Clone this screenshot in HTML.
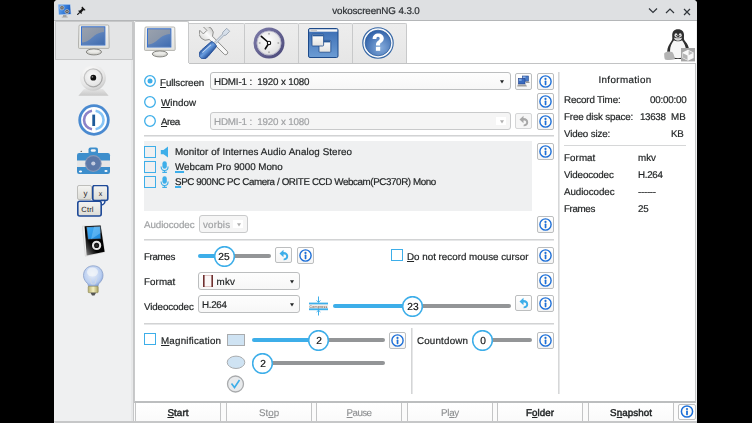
<!DOCTYPE html><html><head><meta charset="utf-8"><style>
html,body{margin:0;padding:0}
body{width:752px;height:423px;background:#000;position:relative;overflow:hidden;font-family:"Liberation Sans",sans-serif;font-size:9.8px;letter-spacing:0.2px;color:#232627;text-rendering:geometricPrecision}
div{position:absolute}
.t{white-space:nowrap;line-height:12px;will-change:transform;-webkit-text-stroke:0.2px currentColor}
.u{text-decoration:underline;text-decoration-thickness:1px;text-underline-offset:0.8px}
.ub{text-decoration:underline;text-decoration-color:#3daee9;text-decoration-thickness:2px;text-underline-offset:0.6px}
.h{width:21px;height:21px;box-sizing:border-box;border:1.6px solid #3daee9;border-radius:50%;background:#ffffff;text-align:center;line-height:18.5px;font-size:10.2px;letter-spacing:0;color:#141617;will-change:transform;-webkit-text-stroke:0.2px currentColor}
.bt{box-sizing:border-box;border-left:1px solid #c4c5c6;border-right:1px solid #c4c5c6;background:linear-gradient(#ffffff,#fafafa);text-align:center;line-height:22px;font-size:9.8px;will-change:transform;-webkit-text-stroke:0.12px currentColor}
.bt b{font-weight:normal;-webkit-text-stroke:0.45px currentColor}
</style></head><body>
<div style="left:54px;top:0px;width:643px;height:423px;background:#eff0f1;border-radius:4px 4px 0 0;"></div>
<div style="left:54px;top:0px;width:643px;height:21px;background:#dee0e2;border-radius:4px 4px 0 0;border-bottom:1px solid #b4b6b8;box-sizing:border-box;"></div>
<div class="t" style="left:275.5px;width:200px;text-align:center;top:5.9px;letter-spacing:-0.106px;color:#2a2e32">vokoscreenNG 4.3.0</div>
<svg style="position:absolute;left:648px;top:7px" width="10" height="8" viewBox="0 0 10 8"><path d="M1 1.5 L5 5.5 L9 1.5" fill="none" stroke="#31363b" stroke-width="1.2"/></svg>
<svg style="position:absolute;left:665px;top:7px" width="10" height="8" viewBox="0 0 10 8"><path d="M1 6 L5 2 L9 6" fill="none" stroke="#31363b" stroke-width="1.2"/></svg>
<svg style="position:absolute;left:683px;top:8px" width="8" height="8" viewBox="0 0 8 8"><path d="M1 1 L7 7 M7 1 L1 7" fill="none" stroke="#31363b" stroke-width="1.2"/></svg>
<svg style="position:absolute;left:57px;top:3px" width="15" height="15" viewBox="0 0 15 15"><defs><linearGradient id="apg" x1="0" y1="0" x2="1" y2="0.3"><stop offset="0" stop-color="#7ab0f0"/><stop offset="0.5" stop-color="#3f86e0"/><stop offset="1" stop-color="#1a5cc0"/></linearGradient></defs><path d="M0.8 1 L13.6 1.2 L14.2 11.6 L1.4 12 Z" fill="url(#apg)" stroke="#dfe6ee" stroke-width="0.8"/><circle cx="5" cy="4.8" r="2.1" fill="#5c5c5c" stroke="#e8e8e8" stroke-width="0.5"/><circle cx="10" cy="8.6" r="2.1" fill="#5c5c5c" stroke="#e8e8e8" stroke-width="0.5"/><circle cx="5" cy="4.8" r="0.6" fill="#ddd"/><circle cx="10" cy="8.6" r="0.6" fill="#ddd"/><rect x="6" y="12.3" width="3.5" height="1.5" fill="#8c8c8c"/><rect x="4.8" y="13.6" width="6" height="1" fill="#b0b0b0"/></svg>
<svg style="position:absolute;left:77px;top:5px" width="10" height="10" viewBox="0 0 10 10"><path d="M5.2 1.6 L8.6 5 L7.6 5.6 L6.4 5.3 L4.6 7.2 L4.8 8.6 L4.2 9 L1.2 6 L1.6 5.4 L3 5.6 L4.8 3.8 L4.5 2.6 Z" fill="#151515"/><path d="M2.8 7.4 L0.3 9.8" stroke="#151515" stroke-width="1.1"/></svg>
<div style="left:54px;top:21px;width:79px;height:402px;background:#eff0f1;"></div>
<div style="left:131px;top:21px;width:2px;height:402px;background:#e7e8e9;"></div>
<div style="left:133px;top:21px;width:1px;height:402px;background:#c6c7c8;"></div>
<div style="left:55px;top:21px;width:78px;height:39px;background:#e4e5e6;border:1px solid #c6c7c8;box-sizing:border-box;"></div>
<div style="left:134px;top:21px;width:562px;height:42px;background:#ffffff;"></div>
<div style="left:134px;top:63px;width:562px;height:340px;background:#ffffff;border-right:1px solid #c4c6c7;border-bottom:2px solid #bcbebf;border-left:1px solid #c8c9ca;box-sizing:border-box;"></div>
<div style="left:189px;top:63px;width:507px;height:1px;background:#c2c3c4;"></div>
<div style="left:134px;top:21px;width:55px;height:42px;background:#ffffff;border-left:1px solid #c8c9ca;border-top:1px solid #c8c9ca;border-right:1px solid #c8c9ca;border-radius:2px 2px 0 0;box-sizing:border-box;"></div>
<div style="left:189px;top:23px;width:56px;height:40px;background:linear-gradient(#ededed,#e6e6e6);border:1px solid #c8c9ca;border-bottom:none;border-left:none;border-radius:0 2px 0 0;box-sizing:border-box;"></div>
<div style="left:245px;top:23px;width:54px;height:40px;background:linear-gradient(#ededed,#e6e6e6);border:1px solid #c8c9ca;border-bottom:none;border-left:none;border-radius:0 2px 0 0;box-sizing:border-box;"></div>
<div style="left:299px;top:23px;width:54px;height:40px;background:linear-gradient(#ededed,#e6e6e6);border:1px solid #c8c9ca;border-bottom:none;border-left:none;border-radius:0 2px 0 0;box-sizing:border-box;"></div>
<div style="left:353px;top:23px;width:54px;height:40px;background:linear-gradient(#ededed,#e6e6e6);border:1px solid #c8c9ca;border-bottom:none;border-left:none;border-radius:0 2px 0 0;box-sizing:border-box;"></div>
<svg style="position:absolute;left:144px;top:75px" width="12" height="12" viewBox="0 0 12 12"><circle cx="6" cy="6" r="5.3" fill="#ffffff" stroke="#3daee9" stroke-width="1.3"/><circle cx="6" cy="6" r="2.5" fill="#3daee9"/></svg>
<div class="t" style="left:160.3px;top:77.5px;letter-spacing:-0.111px;"><span class="u">F</span>ullscreen</div>
<div style="left:210px;top:72px;width:301px;height:18px;border:1px solid #bcbebf;border-radius:3px;background:linear-gradient(#fdfdfd,#f7f7f7);box-sizing:border-box;"></div>
<div class="t" style="left:214px;top:77.2px;letter-spacing:-0.15px;color:#232627">HDMI-1 :&nbsp; 1920 x 1080</div>
<svg style="position:absolute;left:499.5px;top:79.5px" width="4" height="4" viewBox="0 0 4 4"><path d="M0 0.2 L4 0.2 L2 3.6 Z" fill="#232627"/></svg>
<div style="left:515px;top:73px;width:17px;height:17px;border:1px solid #bcbebf;border-radius:2px;background:linear-gradient(#ffffff,#f4f4f4);box-sizing:border-box;"></div>
<div style="left:537px;top:73px;width:17px;height:17px;border:1px solid #bcbebf;border-radius:2px;background:linear-gradient(#ffffff,#f4f4f4);box-sizing:border-box;"></div>
<svg style="position:absolute;left:539px;top:74.5px" width="13" height="13" viewBox="0 0 13 13"><circle cx="6.5" cy="6.5" r="5.6" fill="#fffdf8" stroke="#1d6fd8" stroke-width="1.4"/><circle cx="6.5" cy="3.9" r="1.1" fill="#1d6fd8"/><rect x="5.7" y="5.6" width="1.7" height="4.6" rx="0.6" fill="#1d6fd8"/></svg>
<svg style="position:absolute;left:144px;top:96px" width="12" height="12" viewBox="0 0 12 12"><circle cx="6" cy="6" r="5.3" fill="#ffffff" stroke="#3daee9" stroke-width="1.3"/></svg>
<div class="t" style="left:160.5px;top:97.5px;letter-spacing:0.06px;"><span class="u">W</span>indow</div>
<div style="left:537px;top:93px;width:17px;height:17px;border:1px solid #bcbebf;border-radius:2px;background:linear-gradient(#ffffff,#f4f4f4);box-sizing:border-box;"></div>
<svg style="position:absolute;left:539px;top:94.5px" width="13" height="13" viewBox="0 0 13 13"><circle cx="6.5" cy="6.5" r="5.6" fill="#fffdf8" stroke="#1d6fd8" stroke-width="1.4"/><circle cx="6.5" cy="3.9" r="1.1" fill="#1d6fd8"/><rect x="5.7" y="5.6" width="1.7" height="4.6" rx="0.6" fill="#1d6fd8"/></svg>
<svg style="position:absolute;left:144px;top:115px" width="12" height="12" viewBox="0 0 12 12"><circle cx="6" cy="6" r="5.3" fill="#ffffff" stroke="#3daee9" stroke-width="1.3"/></svg>
<div class="t" style="left:160.5px;top:116.5px;letter-spacing:-0.467px;"><span class="u">A</span>rea</div>
<div style="left:210px;top:112px;width:301px;height:18px;border:1px solid #c9cacb;border-radius:3px;background:#f5f5f5;box-sizing:border-box;"></div>
<div class="t" style="left:214px;top:117.2px;letter-spacing:-0.15px;color:#a0a2a4">HDMI-1 :&nbsp; 1920 x 1080</div>
<div style="left:496px;top:117px;width:10px;height:8px;background:#fff"></div>
<svg style="position:absolute;left:499.5px;top:119.5px" width="4" height="4" viewBox="0 0 4 4"><path d="M0 0.2 L4 0.2 L2 3.6 Z" fill="#b0b0b0"/></svg>
<div style="left:515px;top:113px;width:17px;height:16px;border:1px solid #d5d6d7;border-radius:2px;background:#f6f6f6;box-sizing:border-box;"></div>
<svg style="position:absolute;left:517px;top:114px" width="13" height="14" viewBox="0 0 13 14"><path d="M2.5 5.5 L6.5 1.8 L6.5 4 C9.5 4 11.2 5.8 11.2 8.2 C11.2 10.6 9.3 12.4 6.5 12.3 L6.8 10.6 C8.2 10.5 9.2 9.6 9.2 8.3 C9.2 7 8.3 6.5 6.5 6.6 L6.5 9.2 Z" fill="#a8a8a8"/></svg>
<div style="left:537px;top:113px;width:17px;height:17px;border:1px solid #bcbebf;border-radius:2px;background:linear-gradient(#ffffff,#f4f4f4);box-sizing:border-box;"></div>
<svg style="position:absolute;left:539px;top:114.5px" width="13" height="13" viewBox="0 0 13 13"><circle cx="6.5" cy="6.5" r="5.6" fill="#fffdf8" stroke="#1d6fd8" stroke-width="1.4"/><circle cx="6.5" cy="3.9" r="1.1" fill="#1d6fd8"/><rect x="5.7" y="5.6" width="1.7" height="4.6" rx="0.6" fill="#1d6fd8"/></svg>
<div style="left:144px;top:135px;width:410px;height:2px;background:linear-gradient(#d2d3d4 50%,#e6e7e8 50%);"></div>
<div style="left:144px;top:141px;width:388px;height:70px;background:#eff0f1;"></div>
<div style="left:144px;top:146px;width:12px;height:12px;border:1.8px solid #3daee9;box-sizing:border-box;"></div>
<svg style="position:absolute;left:160px;top:146px" width="9" height="12" viewBox="0 0 9 12"><path d="M0.8 4 L3.5 4 L8 0.6 L8 11.6 L3.5 8.3 L0.8 8.3 Z" fill="#3daee9"/></svg>
<div class="t" style="left:175px;top:146.5px;letter-spacing:0.1px;">Monitor of Internes Audio Analog Stereo</div>
<div style="left:144px;top:161px;width:12px;height:12px;border:1.8px solid #3daee9;box-sizing:border-box;"></div>
<svg style="position:absolute;left:160px;top:161px" width="9" height="12" viewBox="0 0 9 12"><rect x="2.4" y="0.2" width="4.4" height="7.6" rx="2.2" fill="#3daee9"/><path d="M1.1 5.4 C1.1 8.2 2.7 9.5 4.6 9.5 C6.5 9.5 8.1 8.2 8.1 5.4" fill="none" stroke="#3daee9" stroke-width="1.1"/><path d="M4.6 9.5 L4.6 11 M2.3 11.4 L6.9 11.4" stroke="#3daee9" stroke-width="1.1"/></svg>
<div class="t" style="left:175px;top:161.5px;letter-spacing:-0.026px;"><span class="ub">W</span>ebcam Pro 9000 Mono</div>
<div style="left:144px;top:176px;width:12px;height:12px;border:1.8px solid #3daee9;box-sizing:border-box;"></div>
<svg style="position:absolute;left:160px;top:176px" width="9" height="12" viewBox="0 0 9 12"><rect x="2.4" y="0.2" width="4.4" height="7.6" rx="2.2" fill="#3daee9"/><path d="M1.1 5.4 C1.1 8.2 2.7 9.5 4.6 9.5 C6.5 9.5 8.1 8.2 8.1 5.4" fill="none" stroke="#3daee9" stroke-width="1.1"/><path d="M4.6 9.5 L4.6 11 M2.3 11.4 L6.9 11.4" stroke="#3daee9" stroke-width="1.1"/></svg>
<div class="t" style="left:175px;top:176.5px;letter-spacing:-0.4px;"><span class="ub">S</span>PC 900NC PC Camera / ORITE CCD Webcam(PC370R) Mono</div>
<div style="left:537px;top:143px;width:17px;height:17px;border:1px solid #bcbebf;border-radius:2px;background:linear-gradient(#ffffff,#f4f4f4);box-sizing:border-box;"></div>
<svg style="position:absolute;left:539px;top:144.5px" width="13" height="13" viewBox="0 0 13 13"><circle cx="6.5" cy="6.5" r="5.6" fill="#fffdf8" stroke="#1d6fd8" stroke-width="1.4"/><circle cx="6.5" cy="3.9" r="1.1" fill="#1d6fd8"/><rect x="5.7" y="5.6" width="1.7" height="4.6" rx="0.6" fill="#1d6fd8"/></svg>
<div class="t" style="left:144px;top:219.5px;letter-spacing:-0.067px;color:#a0a2a4">Audiocodec</div>
<div style="left:199px;top:215px;width:49px;height:18px;border:1px solid #c9cacb;border-radius:3px;background:#f5f5f5;box-sizing:border-box;"></div>
<div class="t" style="left:203px;top:220.2px;color:#a0a2a4">vorbis</div>
<div style="left:233px;top:220px;width:10px;height:8px;background:#fff"></div>
<svg style="position:absolute;left:236.5px;top:222.5px" width="4" height="4" viewBox="0 0 4 4"><path d="M0 0.2 L4 0.2 L2 3.6 Z" fill="#b0b0b0"/></svg>
<div style="left:537px;top:216px;width:17px;height:17px;border:1px solid #bcbebf;border-radius:2px;background:linear-gradient(#ffffff,#f4f4f4);box-sizing:border-box;"></div>
<svg style="position:absolute;left:539px;top:217.5px" width="13" height="13" viewBox="0 0 13 13"><circle cx="6.5" cy="6.5" r="5.6" fill="#fffdf8" stroke="#1d6fd8" stroke-width="1.4"/><circle cx="6.5" cy="3.9" r="1.1" fill="#1d6fd8"/><rect x="5.7" y="5.6" width="1.7" height="4.6" rx="0.6" fill="#1d6fd8"/></svg>
<div style="left:144px;top:239px;width:410px;height:2px;background:linear-gradient(#d2d3d4 50%,#e6e7e8 50%);"></div>
<div class="t" style="left:144px;top:251.5px;letter-spacing:-0.38px;">Frames</div>
<div style="left:198px;top:254px;width:26px;height:4px;background:#3daee9;border-radius:2px;"></div>
<div style="left:224px;top:254px;width:47px;height:4px;background:#939597;border-radius:2px;"></div>
<svg style="position:absolute;left:213.5px;top:245.5px" width="21" height="21" viewBox="0 0 21 21"><circle cx="10.5" cy="10.5" r="9.85" fill="#ffffff" stroke="#3daee9" stroke-width="1.6"/></svg>
<div class="t" style="left:209px;width:30px;text-align:center;top:251.5px;font-size:10.2px;letter-spacing:0;color:#141617;-webkit-text-stroke:0.2px currentColor">25</div>
<div style="left:275px;top:247px;width:17px;height:16px;border:1px solid #bcbebf;border-radius:2px;background:linear-gradient(#ffffff,#f4f4f4);box-sizing:border-box;"></div>
<svg style="position:absolute;left:277px;top:248px" width="13" height="14" viewBox="0 0 13 14"><path d="M2.5 5.5 L6.5 1.8 L6.5 4 C9.5 4 11.2 5.8 11.2 8.2 C11.2 10.6 9.3 12.4 6.5 12.3 L6.8 10.6 C8.2 10.5 9.2 9.6 9.2 8.3 C9.2 7 8.3 6.5 6.5 6.6 L6.5 9.2 Z" fill="#3daee9"/></svg>
<div style="left:297px;top:247px;width:17px;height:17px;border:1px solid #bcbebf;border-radius:2px;background:linear-gradient(#ffffff,#f4f4f4);box-sizing:border-box;"></div>
<svg style="position:absolute;left:299px;top:248.5px" width="13" height="13" viewBox="0 0 13 13"><circle cx="6.5" cy="6.5" r="5.6" fill="#fffdf8" stroke="#1d6fd8" stroke-width="1.4"/><circle cx="6.5" cy="3.9" r="1.1" fill="#1d6fd8"/><rect x="5.7" y="5.6" width="1.7" height="4.6" rx="0.6" fill="#1d6fd8"/></svg>
<div style="left:391px;top:249px;width:12px;height:12px;border:1.8px solid #3daee9;box-sizing:border-box;"></div>
<div class="t" style="left:407px;top:251.5px;letter-spacing:0.0px;"><span class="u">D</span>o not record mouse cursor</div>
<div style="left:537px;top:247px;width:17px;height:17px;border:1px solid #bcbebf;border-radius:2px;background:linear-gradient(#ffffff,#f4f4f4);box-sizing:border-box;"></div>
<svg style="position:absolute;left:539px;top:248.5px" width="13" height="13" viewBox="0 0 13 13"><circle cx="6.5" cy="6.5" r="5.6" fill="#fffdf8" stroke="#1d6fd8" stroke-width="1.4"/><circle cx="6.5" cy="3.9" r="1.1" fill="#1d6fd8"/><rect x="5.7" y="5.6" width="1.7" height="4.6" rx="0.6" fill="#1d6fd8"/></svg>
<div class="t" style="left:144px;top:276.5px;letter-spacing:0.06px;">Format</div>
<div style="left:198px;top:272px;width:102px;height:18px;border:1px solid #bcbebf;border-radius:3px;background:linear-gradient(#fdfdfd,#f7f7f7);box-sizing:border-box;"></div>
<div class="t" style="left:202px;top:277.2px;color:#232627">&nbsp;&nbsp;&nbsp;&nbsp;&nbsp;mkv</div>
<svg style="position:absolute;left:289.5px;top:279.5px" width="4" height="4" viewBox="0 0 4 4"><path d="M0 0.2 L4 0.2 L2 3.6 Z" fill="#232627"/></svg>
<svg style="position:absolute;left:203px;top:275px" width="10" height="12" viewBox="0 0 10 12"><rect x="0.5" y="0.5" width="9" height="11" fill="#fbf6f6" stroke="#d9b8b8" stroke-width="0.8"/><rect x="0" y="0" width="1.6" height="12" fill="#6f2f2f"/><rect x="8.4" y="0" width="1.6" height="12" fill="#6f2f2f"/></svg>
<div style="left:537px;top:272px;width:17px;height:17px;border:1px solid #bcbebf;border-radius:2px;background:linear-gradient(#ffffff,#f4f4f4);box-sizing:border-box;"></div>
<svg style="position:absolute;left:539px;top:273.5px" width="13" height="13" viewBox="0 0 13 13"><circle cx="6.5" cy="6.5" r="5.6" fill="#fffdf8" stroke="#1d6fd8" stroke-width="1.4"/><circle cx="6.5" cy="3.9" r="1.1" fill="#1d6fd8"/><rect x="5.7" y="5.6" width="1.7" height="4.6" rx="0.6" fill="#1d6fd8"/></svg>
<div class="t" style="left:144px;top:301.5px;letter-spacing:-0.133px;">Videocodec</div>
<div style="left:198px;top:295px;width:102px;height:18px;border:1px solid #bcbebf;border-radius:3px;background:linear-gradient(#fdfdfd,#f7f7f7);box-sizing:border-box;"></div>
<div class="t" style="left:202px;top:300.2px;letter-spacing:-0.325px;color:#232627">H.264</div>
<svg style="position:absolute;left:289.5px;top:302.5px" width="4" height="4" viewBox="0 0 4 4"><path d="M0 0.2 L4 0.2 L2 3.6 Z" fill="#232627"/></svg>
<svg style="position:absolute;left:309px;top:296px" width="19" height="20" viewBox="0 0 19 20"><rect x="0" y="6.6" width="19" height="2" fill="#3daee9"/><rect x="0" y="12.2" width="19" height="2" fill="#3daee9"/><rect x="0" y="8.6" width="19" height="3.6" fill="#f2ece8"/><path d="M9.5 0.5 L9.5 6.5 M7.6 4.4 L9.5 6.4 L11.4 4.4 M9.5 14 L9.5 19.5 M7.6 16 L9.5 14.2 L11.4 16" fill="none" stroke="#3daee9" stroke-width="1"/><text x="9.5" y="11.6" font-family="Liberation Sans" font-size="3.6" fill="#5a4a40" text-anchor="middle">Compress</text></svg>
<div style="left:333px;top:304px;width:79.5px;height:4px;background:#3daee9;border-radius:2px;"></div>
<div style="left:412.5px;top:304px;width:98.5px;height:4px;background:#939597;border-radius:2px;"></div>
<svg style="position:absolute;left:402.0px;top:295.5px" width="21" height="21" viewBox="0 0 21 21"><circle cx="10.5" cy="10.5" r="9.85" fill="#ffffff" stroke="#3daee9" stroke-width="1.6"/></svg>
<div class="t" style="left:397.5px;width:30px;text-align:center;top:301.5px;font-size:10.2px;letter-spacing:0;color:#141617;-webkit-text-stroke:0.2px currentColor">23</div>
<div style="left:515px;top:295px;width:17px;height:16px;border:1px solid #bcbebf;border-radius:2px;background:linear-gradient(#ffffff,#f4f4f4);box-sizing:border-box;"></div>
<svg style="position:absolute;left:517px;top:296px" width="13" height="14" viewBox="0 0 13 14"><path d="M2.5 5.5 L6.5 1.8 L6.5 4 C9.5 4 11.2 5.8 11.2 8.2 C11.2 10.6 9.3 12.4 6.5 12.3 L6.8 10.6 C8.2 10.5 9.2 9.6 9.2 8.3 C9.2 7 8.3 6.5 6.5 6.6 L6.5 9.2 Z" fill="#3daee9"/></svg>
<div style="left:537px;top:295px;width:17px;height:17px;border:1px solid #bcbebf;border-radius:2px;background:linear-gradient(#ffffff,#f4f4f4);box-sizing:border-box;"></div>
<svg style="position:absolute;left:539px;top:296.5px" width="13" height="13" viewBox="0 0 13 13"><circle cx="6.5" cy="6.5" r="5.6" fill="#fffdf8" stroke="#1d6fd8" stroke-width="1.4"/><circle cx="6.5" cy="3.9" r="1.1" fill="#1d6fd8"/><rect x="5.7" y="5.6" width="1.7" height="4.6" rx="0.6" fill="#1d6fd8"/></svg>
<div style="left:144px;top:323px;width:410px;height:2px;background:linear-gradient(#d2d3d4 50%,#e6e7e8 50%);"></div>
<div style="left:144px;top:333px;width:12px;height:12px;border:1.8px solid #3daee9;box-sizing:border-box;"></div>
<div class="t" style="left:161px;top:335.5px;letter-spacing:0.192px;"><span class="u">M</span>agnification</div>
<div style="left:227px;top:334px;width:18px;height:12px;background:#cfe3f3;border:1px solid #a9abad;box-sizing:border-box;"></div>
<div style="left:252px;top:338px;width:66.5px;height:4px;background:#3daee9;border-radius:2px;"></div>
<div style="left:318.5px;top:338px;width:66.5px;height:4px;background:#939597;border-radius:2px;"></div>
<svg style="position:absolute;left:308.0px;top:329.5px" width="21" height="21" viewBox="0 0 21 21"><circle cx="10.5" cy="10.5" r="9.85" fill="#ffffff" stroke="#3daee9" stroke-width="1.6"/></svg>
<div class="t" style="left:303.5px;width:30px;text-align:center;top:335.5px;font-size:10.2px;letter-spacing:0;color:#141617;-webkit-text-stroke:0.2px currentColor">2</div>
<div style="left:389px;top:332px;width:17px;height:17px;border:1px solid #bcbebf;border-radius:2px;background:linear-gradient(#ffffff,#f4f4f4);box-sizing:border-box;"></div>
<svg style="position:absolute;left:391px;top:333.5px" width="13" height="13" viewBox="0 0 13 13"><circle cx="6.5" cy="6.5" r="5.6" fill="#fffdf8" stroke="#1d6fd8" stroke-width="1.4"/><circle cx="6.5" cy="3.9" r="1.1" fill="#1d6fd8"/><rect x="5.7" y="5.6" width="1.7" height="4.6" rx="0.6" fill="#1d6fd8"/></svg>
<div style="left:411px;top:328px;width:2px;height:66px;background:linear-gradient(90deg,#d4d5d6 50%,#e6e7e8 50%);"></div>
<svg style="position:absolute;left:226px;top:355px" width="20" height="15" viewBox="0 0 20 15"><ellipse cx="10" cy="7.3" rx="8.8" ry="6.2" fill="#cfe3f3" stroke="#a9abad" stroke-width="1"/></svg>
<div style="left:252px;top:361px;width:10.5px;height:4px;background:#3daee9;border-radius:2px;"></div>
<div style="left:262.5px;top:361px;width:122.5px;height:4px;background:#939597;border-radius:2px;"></div>
<svg style="position:absolute;left:252.0px;top:352.5px" width="21" height="21" viewBox="0 0 21 21"><circle cx="10.5" cy="10.5" r="9.85" fill="#ffffff" stroke="#3daee9" stroke-width="1.6"/></svg>
<div class="t" style="left:247.5px;width:30px;text-align:center;top:358.5px;font-size:10.2px;letter-spacing:0;color:#141617;-webkit-text-stroke:0.2px currentColor">2</div>
<svg style="position:absolute;left:226px;top:375px" width="19" height="18" viewBox="0 0 19 18"><circle cx="9.5" cy="9" r="8" fill="#e8eaec" stroke="#a9abad" stroke-width="1.3"/><path d="M5.5 8.5 L8.5 12.5 L13.5 5" fill="none" stroke="#3daee9" stroke-width="1.6"/></svg>
<div class="t" style="left:417px;top:335.5px;letter-spacing:0.175px;">Countdown</div>
<div style="left:472px;top:338px;width:10.5px;height:4px;background:#3daee9;border-radius:2px;"></div>
<div style="left:482.5px;top:338px;width:49.5px;height:4px;background:#939597;border-radius:2px;"></div>
<svg style="position:absolute;left:472.0px;top:329.5px" width="21" height="21" viewBox="0 0 21 21"><circle cx="10.5" cy="10.5" r="9.85" fill="#ffffff" stroke="#3daee9" stroke-width="1.6"/></svg>
<div class="t" style="left:467.5px;width:30px;text-align:center;top:335.5px;font-size:10.2px;letter-spacing:0;color:#141617;-webkit-text-stroke:0.2px currentColor">0</div>
<div style="left:537px;top:332px;width:17px;height:17px;border:1px solid #bcbebf;border-radius:2px;background:linear-gradient(#ffffff,#f4f4f4);box-sizing:border-box;"></div>
<svg style="position:absolute;left:539px;top:333.5px" width="13" height="13" viewBox="0 0 13 13"><circle cx="6.5" cy="6.5" r="5.6" fill="#fffdf8" stroke="#1d6fd8" stroke-width="1.4"/><circle cx="6.5" cy="3.9" r="1.1" fill="#1d6fd8"/><rect x="5.7" y="5.6" width="1.7" height="4.6" rx="0.6" fill="#1d6fd8"/></svg>
<div style="left:558px;top:72px;width:2px;height:322px;background:linear-gradient(90deg,#d6d7d8 50%,#e6e7e8 50%);"></div>
<div class="t" style="left:525.0px;width:200px;text-align:center;top:74.5px;letter-spacing:0.38px;">Information</div>
<div class="t" style="left:563.8px;top:94.5px;letter-spacing:-0.145px;">Record Time:</div>
<div class="t" style="right:65.20000000000005px;top:94.5px;letter-spacing:-0.2px;">00:00:00</div>
<div class="t" style="left:563.8px;top:111.5px;letter-spacing:-0.173px;">Free disk space:</div>
<div class="t" style="left:640px;top:111.5px;letter-spacing:-0.325px;">13638</div>
<div class="t" style="left:671px;top:111.5px;letter-spacing:0.2px;">MB</div>
<div class="t" style="left:563.8px;top:128.5px;letter-spacing:-0.14px;">Video size:</div>
<div class="t" style="left:671px;top:128.5px;letter-spacing:-0.3px;">KB</div>
<div style="left:564px;top:145px;width:122px;height:1px;background:#d6d7d8;"></div>
<div class="t" style="left:563.8px;top:152.5px;letter-spacing:0.06px;">Format</div>
<div class="t" style="left:638px;top:152.5px;letter-spacing:0.0px;">mkv</div>
<div class="t" style="left:563.8px;top:169.5px;letter-spacing:-0.133px;">Videocodec</div>
<div class="t" style="left:638px;top:169.5px;letter-spacing:-0.325px;">H.264</div>
<div class="t" style="left:563.8px;top:186.5px;letter-spacing:-0.067px;">Audiocodec</div>
<div class="t" style="left:638px;top:186.5px;letter-spacing:-0.3px;">------</div>
<div class="t" style="left:563.8px;top:203.5px;letter-spacing:-0.38px;">Frames</div>
<div class="t" style="left:638px;top:203.5px;letter-spacing:-0.3px;">25</div>
<svg style="position:absolute;left:144px;top:26px" width="32" height="32" viewBox="0 0 32 32"><defs><linearGradient id="mbz" x1="0" y1="0" x2="0" y2="1"><stop offset="0" stop-color="#f4f4f2"/><stop offset="1" stop-color="#e2e2de"/></linearGradient>
<linearGradient id="msc" x1="0" y1="0" x2="1" y2="1"><stop offset="0" stop-color="#9aa2ae"/><stop offset="1" stop-color="#7d8ca4"/></linearGradient>
<linearGradient id="msb" x1="0" y1="0" x2="1" y2="1"><stop offset="0" stop-color="#7494c4"/><stop offset="1" stop-color="#3f6cb0"/></linearGradient></defs>
<path d="M2 1 L29.8 1 Q30.8 1 30.8 2 L31.2 23.4 Q31.2 24.4 30.2 24.4 L1.4 24.4 Q0.4 24.4 0.4 23.4 L1 2 Q1 1 2 1 Z" fill="url(#mbz)" stroke="#a4a4a0" stroke-width="0.8"/>
<rect x="3.5" y="2.8" width="23.4" height="18.2" fill="url(#msc)" stroke="#2c6ad0" stroke-width="0.9"/>
<path d="M3.9 18.6 C9.5 18 13 14.5 16.5 11.5 C19.5 9 23 8.3 26.5 8 L26.5 20.6 L3.9 20.6 Z" fill="url(#msb)"/>
<rect x="13" y="24.4" width="6" height="1.6" fill="#cfcfcb"/>
<ellipse cx="15.9" cy="27.9" rx="7.6" ry="3" fill="#d6d6d2" stroke="#7a7a76" stroke-width="0.9"/>
<ellipse cx="15.9" cy="27.2" rx="5.6" ry="1.5" fill="#ebebe8"/></svg>
<svg style="position:absolute;left:78px;top:24px" width="32" height="32" viewBox="0 0 32 32"><defs><linearGradient id="mbz2" x1="0" y1="0" x2="0" y2="1"><stop offset="0" stop-color="#f4f4f2"/><stop offset="1" stop-color="#e2e2de"/></linearGradient>
<linearGradient id="msc2" x1="0" y1="0" x2="1" y2="1"><stop offset="0" stop-color="#9aa2ae"/><stop offset="1" stop-color="#7d8ca4"/></linearGradient>
<linearGradient id="msb" x1="0" y1="0" x2="1" y2="1"><stop offset="0" stop-color="#7494c4"/><stop offset="1" stop-color="#3f6cb0"/></linearGradient></defs>
<path d="M2 1 L29.8 1 Q30.8 1 30.8 2 L31.2 23.4 Q31.2 24.4 30.2 24.4 L1.4 24.4 Q0.4 24.4 0.4 23.4 L1 2 Q1 1 2 1 Z" fill="url(#mbz2)" stroke="#a4a4a0" stroke-width="0.8"/>
<rect x="3.5" y="2.8" width="23.4" height="18.2" fill="url(#msc2)" stroke="#2c6ad0" stroke-width="0.9"/>
<path d="M3.9 18.6 C9.5 18 13 14.5 16.5 11.5 C19.5 9 23 8.3 26.5 8 L26.5 20.6 L3.9 20.6 Z" fill="url(#msb)"/>
<rect x="13" y="24.4" width="6" height="1.6" fill="#cfcfcb"/>
<ellipse cx="15.9" cy="27.9" rx="7.6" ry="3" fill="#d6d6d2" stroke="#7a7a76" stroke-width="0.9"/>
<ellipse cx="15.9" cy="27.2" rx="5.6" ry="1.5" fill="#ebebe8"/></svg>
<svg style="position:absolute;left:199px;top:27px" width="32" height="32" viewBox="0 0 32 32"><defs><linearGradient id="tsd" x1="0" y1="0" x2="1" y2="0"><stop offset="0" stop-color="#2c5ca8"/><stop offset="0.45" stop-color="#6a9ee0"/><stop offset="1" stop-color="#24509a"/></linearGradient>
<linearGradient id="twr" x1="0" y1="0" x2="1" y2="0"><stop offset="0" stop-color="#dcdcda"/><stop offset="0.5" stop-color="#fafafa"/><stop offset="1" stop-color="#d0d0ce"/></linearGradient></defs>
<g transform="translate(7.2,6.2) rotate(-45)"><path d="M2.5 -6.6 A7 7 0 0 1 2.3 6.6 L2.1 28 A2.2 2.2 0 0 1 -2.1 28 L-2.3 6.6 A7 7 0 0 1 -2.5 -6.6 L-2.5 -1.5 L2.5 -1.5 Z" fill="url(#twr)" stroke="#8a8a88" stroke-width="0.9"/></g>
<g transform="translate(29.2,2.8) rotate(45)"><path d="M-2.1 0 L2.1 0 L2.1 5.5 L1 7 L1 20 L-1 20 L-1 7 L-2.1 5.5 Z" fill="#d6dfea" stroke="#8a96a6" stroke-width="0.7"/>
<path d="M-2.6 19.5 C-3.2 19.5 -3.6 20.5 -3.8 22 L-4.6 33 C-4.8 37 -2.8 39.3 0 39.3 C2.8 39.3 4.8 37 4.6 33 L3.8 22 C3.6 20.5 3.2 19.5 2.6 19.5 Z" fill="url(#tsd)" stroke="#1d4890" stroke-width="0.8"/>
<path d="M-1.6 23 L-2.2 34" stroke="#c0d8f6" stroke-width="1" stroke-linecap="round"/></g></svg>
<svg style="position:absolute;left:253px;top:27px" width="32" height="32" viewBox="0 0 32 32"><defs><radialGradient id="cf" cx="0.45" cy="0.4" r="0.7"><stop offset="0" stop-color="#ffffff"/><stop offset="1" stop-color="#d6d6d6"/></radialGradient>
<linearGradient id="cr" x1="0" y1="0" x2="1" y2="1"><stop offset="0" stop-color="#7c7aa8"/><stop offset="1" stop-color="#4c4a7a"/></linearGradient></defs>
<circle cx="16" cy="16" r="13.9" fill="url(#cf)" stroke="url(#cr)" stroke-width="3.2"/>
<circle cx="16" cy="16" r="12" fill="none" stroke="#9c9ab8" stroke-width="0.6"/>
<circle cx="16" cy="6.8" r="1" fill="#b0b0b0"/><circle cx="25.3" cy="16" r="1" fill="#b0b0b0"/><circle cx="16" cy="25.3" r="1" fill="#b0b0b0"/><circle cx="6.7" cy="16" r="1" fill="#b0b0b0"/>
<path d="M16 16 L8.3 9.3 M16 16 L12.3 21.8" stroke="#0c0c0c" stroke-width="1.6" stroke-linecap="round"/>
<circle cx="16" cy="16" r="1.7" fill="#fff" stroke="#0c0c0c" stroke-width="1.1"/></svg>
<svg style="position:absolute;left:307px;top:27px" width="32" height="32" viewBox="0 0 32 32"><defs><linearGradient id="wb" x1="0" y1="0" x2="0" y2="1"><stop offset="0" stop-color="#3a6cb2"/><stop offset="1" stop-color="#6c9cd4"/></linearGradient>
<linearGradient id="ww" x1="0" y1="0" x2="0" y2="1"><stop offset="0" stop-color="#ffffff"/><stop offset="1" stop-color="#e2e2e0"/></linearGradient></defs>
<rect x="1.5" y="1.5" width="29.5" height="29" rx="1.5" fill="url(#wb)" stroke="#1d4a8a" stroke-width="1"/>
<rect x="2.3" y="2.3" width="28" height="2.4" fill="#f6f6f6"/>
<rect x="3.5" y="2.6" width="6.5" height="1.8" fill="#c8c8c8"/>
<rect x="12" y="13.4" width="11.8" height="11.8" rx="0.8" fill="url(#ww)" stroke="#1d4a8a" stroke-width="0.8"/>
<rect x="12.4" y="13.8" width="11" height="1.6" fill="#2a5a9a"/>
<rect x="5" y="7.2" width="11.6" height="11.8" rx="0.8" fill="url(#ww)" stroke="#1d4a8a" stroke-width="0.8"/>
<rect x="5.4" y="7.6" width="10.8" height="1.7" fill="#2a5a9a"/></svg>
<svg style="position:absolute;left:362px;top:27px" width="32" height="32" viewBox="0 0 32 32"><defs><radialGradient id="hb" cx="0.6" cy="0.68" r="0.7"><stop offset="0" stop-color="#86acdc"/><stop offset="1" stop-color="#2f60a8"/></radialGradient></defs>
<circle cx="16" cy="16" r="15.2" fill="#f6f8fb" stroke="#3465a4" stroke-width="1.1"/>
<circle cx="16" cy="16" r="12.8" fill="url(#hb)" stroke="#2f5f9f" stroke-width="0.8"/>
<path d="M10.6 12 C10.6 8.2 13.2 6.4 16.2 6.4 C19.4 6.4 21.8 8.4 21.8 11.5 C21.8 14.3 19.6 15.3 18.7 16 C18 16.6 18.1 17.3 18.1 18.4 L14 18.4 C13.9 16.5 14.3 15.1 15.8 14 C17 13.1 17.7 12.6 17.7 11.5 C17.7 10.5 17 9.8 16 9.8 C14.9 9.8 14.4 10.7 14.4 12 Z" fill="#fff"/>
<rect x="13.9" y="19.8" width="4.3" height="4" fill="#fff"/></svg>
<svg style="position:absolute;left:664px;top:29px" width="32" height="33" viewBox="0 0 32 33"><path d="M14 0.2 C10 0.2 8.2 2.8 8.2 6.2 C8.2 8.6 8.6 10 7.8 11.6 C6.4 14 4.4 16.5 3.6 19.5 C2.8 22.5 3.3 26 5.3 28.5 C8 30.6 19.5 30.6 22.4 28.5 C24.8 26.5 25.6 22.5 24.8 19 C24 15.5 22 13.5 20.6 11.6 C19.6 10 20 8.6 20 6.2 C20 2.8 18 0.2 14 0.2 Z" fill="#2f2f2f"/>
<path d="M10 11.2 C11.6 12.6 16.4 12.6 18 11.2 C20.2 14 22 17.5 22 22 C22 26 19.8 29.2 14 29.2 C8.2 29.2 6 26 6 22 C6 17.5 7.8 14 10 11.2 Z" fill="#f6f6f6"/>
<path d="M9.8 8.5 C10.5 10.8 12 11.8 14 11.8 C16 11.8 17.5 10.8 18.2 8.5 C17 9.2 11 9.2 9.8 8.5 Z" fill="#d8d8d8"/>
<ellipse cx="12" cy="6.2" rx="1.5" ry="1.9" fill="#e4e4e4"/><ellipse cx="16.2" cy="6.2" rx="1.5" ry="1.9" fill="#e4e4e4"/>
<circle cx="12.4" cy="6.6" r="0.6" fill="#333"/><circle cx="15.8" cy="6.6" r="0.6" fill="#333"/>
<path d="M11.5 8.6 C12.5 8 15.5 8 16.5 8.6 C16 9.8 15 10.3 14 10.3 C13 10.3 12 9.8 11.5 8.6 Z" fill="#b8b8b8"/>
<path d="M0.2 24.5 C0.2 27 0.3 29.5 1 30.5 C3.5 31.3 7.5 31.3 10.8 30.3 C10.8 28.5 10 25.5 8.5 23.3 C7 22.3 4.5 22.4 3 22.8 C1.8 23.2 0.8 23.6 0.2 24.5 Z" fill="#b4b4b4"/>
<rect x="17" y="19" width="14" height="13.4" fill="#a6a6a6"/>
<path d="M24 20.8 L29.6 23.6 L29.6 29 L24 31.8 L18.4 29 L18.4 23.6 Z" fill="#f8f8f8"/>
<path d="M18.9 24.3 L23.5 26.6 L23.5 30.9 L18.9 28.6 Z" fill="#b4b4b4"/>
<path d="M24.6 21.8 L28.9 24 L24.6 26.2 Z" fill="#bcbcbc"/></svg>
<svg style="position:absolute;left:78px;top:65px" width="31" height="32" viewBox="0 0 31 32"><defs><radialGradient id="wcg" cx="0.4" cy="0.3" r="0.75"><stop offset="0" stop-color="#ffffff"/><stop offset="0.7" stop-color="#e6e6e6"/><stop offset="1" stop-color="#c4c4c4"/></radialGradient>
<radialGradient id="wci" cx="0.45" cy="0.4" r="0.7"><stop offset="0" stop-color="#fafafa"/><stop offset="1" stop-color="#dedede"/></radialGradient>
<linearGradient id="wcr" x1="0" y1="0" x2="1" y2="1"><stop offset="0" stop-color="#d0d0d0"/><stop offset="1" stop-color="#9a9a9a"/></linearGradient>
<linearGradient id="wcb" x1="0" y1="0" x2="0" y2="1"><stop offset="0" stop-color="#e4e4e4"/><stop offset="1" stop-color="#c8c8c8"/></linearGradient></defs>
<path d="M6 24 L25 24 L30.6 30.8 L0.4 30.8 Z" fill="url(#wcb)"/>
<circle cx="15" cy="13" r="12.8" fill="url(#wcg)"/>
<circle cx="15.2" cy="12.8" r="9" fill="url(#wci)" stroke="url(#wcr)" stroke-width="1.3"/>
<circle cx="15.3" cy="12.7" r="2.9" fill="#101010"/>
<circle cx="14.4" cy="11.8" r="0.9" fill="#888"/></svg>
<svg style="position:absolute;left:78px;top:104px" width="32" height="32" viewBox="0 0 32 32"><circle cx="16" cy="16" r="14.3" fill="#fff" stroke="#4a8ad0" stroke-width="2.8"/>
<path d="M14 6.8 A9.3 9.3 0 0 0 14 25.2" fill="none" stroke="#8c82c8" stroke-width="2.6"/>
<path d="M17.6 6.8 A9.3 9.3 0 0 1 17.6 25.2" fill="none" stroke="#86c4f6" stroke-width="2.6"/>
<rect x="14.3" y="10.6" width="2.8" height="11.4" fill="#1f5a98"/></svg>
<svg style="position:absolute;left:77px;top:147px" width="34" height="28" viewBox="0 0 34 28"><rect x="11.5" y="0.5" width="9.5" height="7" rx="2" fill="#3d8ecc"/>
<rect x="13.8" y="2.3" width="5" height="2.5" rx="1.2" fill="#f4f4f4"/>
<rect x="0" y="6" width="33" height="21" rx="2.2" fill="#3d8ecc"/>
<rect x="0" y="13.5" width="33" height="6.5" fill="#e6e6e6"/>
<circle cx="16.3" cy="16.5" r="8.4" fill="#8898b8"/>
<circle cx="16.3" cy="16.5" r="7.3" fill="#5c78a8"/>
<circle cx="16.3" cy="16.5" r="2.1" fill="#c4cce0"/>
<ellipse cx="3.5" cy="24.5" rx="1.6" ry="0.9" fill="#fff"/><ellipse cx="29" cy="24" rx="1.6" ry="0.9" fill="#fff"/>
<ellipse cx="4.3" cy="4.2" rx="0.8" ry="0.5" fill="#444"/></svg>
<svg style="position:absolute;left:77px;top:185px" width="33" height="33" viewBox="0 0 33 33"><defs><linearGradient id="kk" x1="0" y1="0" x2="0" y2="1"><stop offset="0" stop-color="#f4f4f2"/><stop offset="1" stop-color="#dcdcd6"/></linearGradient></defs>
<rect x="0.5" y="0.5" width="14" height="14" rx="1.5" fill="url(#kk)" stroke="#b8b8b4" stroke-width="0.9"/>
<text x="8.5" y="11" font-family="Liberation Sans" font-size="8" fill="#222" text-anchor="middle">y</text>
<rect x="15.8" y="0.5" width="15" height="15" rx="2" fill="url(#kk)" stroke="#1f4a98" stroke-width="1.6"/>
<text x="23.5" y="10.5" font-family="Liberation Sans" font-size="7" fill="#222" text-anchor="middle">x</text>
<path d="M24 15.5 L28 15.5 Q28 19.5 24 20" fill="#fff" stroke="#1f4a98" stroke-width="1.4"/>
<rect x="0.8" y="16.2" width="23.4" height="14.8" rx="2" fill="url(#kk)" stroke="#1f4a98" stroke-width="1.6"/>
<text x="10.5" y="26.5" font-family="Liberation Sans" font-size="7.5" fill="#222" text-anchor="middle">Ctrl</text></svg>
<svg style="position:absolute;left:82px;top:225px" width="23" height="32" viewBox="0 0 23 32"><defs><linearGradient id="ipb" x1="0" y1="1" x2="0.6" y2="0.4"><stop offset="0" stop-color="#9a9a9a"/><stop offset="0.35" stop-color="#3a3a3a"/><stop offset="0.6" stop-color="#050505"/><stop offset="1" stop-color="#000"/></linearGradient>
<linearGradient id="ips" x1="0" y1="0" x2="1" y2="1"><stop offset="0" stop-color="#46b0f8"/><stop offset="1" stop-color="#1b86da"/></linearGradient></defs>
<path d="M0.3 1.2 L18.6 0.4 L22.8 27 L3.4 31.2 Z" fill="#efefef" stroke="#d2d2d2" stroke-width="0.7"/>
<path d="M2.6 1.2 L18.6 0.6 L22.6 26.8 L4.6 30.6 Z" fill="url(#ipb)"/>
<path d="M4.6 2 L18.2 1.6 L18.8 13.8 L6 14.3 Z" fill="url(#ips)" stroke="#5a3a2a" stroke-width="0.4"/>
<path d="M12 1.8 L18.2 1.6 L18.5 8 Q15 10.5 9 14.2 Z" fill="#8cd0fc" opacity="0.45"/>
<circle cx="14.6" cy="20.4" r="3.6" fill="#111" stroke="#e4e4e4" stroke-width="2.1"/>
<circle cx="14.6" cy="20.4" r="1.5" fill="#2a2a2a"/></svg>
<svg style="position:absolute;left:83px;top:265px" width="21" height="32" viewBox="0 0 21 32"><defs><radialGradient id="bg1" cx="0.45" cy="0.4" r="0.65"><stop offset="0" stop-color="#e8eef8"/><stop offset="0.7" stop-color="#b8cdf0"/><stop offset="1" stop-color="#7a9ad8"/></radialGradient>
<linearGradient id="bb" x1="0" y1="0" x2="1" y2="0"><stop offset="0" stop-color="#b8b070"/><stop offset="0.5" stop-color="#f4f0c0"/><stop offset="1" stop-color="#a8a060"/></linearGradient></defs>
<path d="M10.2 0.8 C4.5 0.8 0.5 5 0.5 10.5 C0.5 14 2.5 16.5 4.5 18.5 C5.2 19.3 5.5 20.5 5.5 21.5 L15 21.5 C15 20.5 15.3 19.3 16 18.5 C18 16.5 20 14 20 10.5 C20 5 16 0.8 10.2 0.8 Z" fill="url(#bg1)" stroke="#8aa0c8" stroke-width="0.8"/>
<ellipse cx="9.5" cy="7" rx="5.5" ry="4.5" fill="#f4f6fa" opacity="0.7"/>
<path d="M7 13 L8.5 19 M13.5 13 L12 19 M8.5 19 L12 19" stroke="#d8dce0" stroke-width="0.7" fill="none"/>
<rect x="5.2" y="21.2" width="10" height="6.5" rx="0.8" fill="url(#bb)" stroke="#8a8450" stroke-width="0.6"/>
<path d="M7.5 27.7 L13 27.7 L11.5 30.5 L9 30.5 Z" fill="#555"/></svg>
<svg style="position:absolute;left:517px;top:75px" width="13" height="12" viewBox="0 0 13 12"><rect x="5.5" y="1" width="6" height="5.2" fill="#4a7cc8" stroke="#2a4a8a" stroke-width="0.6"/>
<rect x="6" y="1.5" width="2.5" height="2" fill="#8ab0e8"/>
<path d="M8.5 6.6 L12 6.6 L12.8 8 L9 8 Z" fill="#9a9a9a"/>
<rect x="1.5" y="3.5" width="6.5" height="5.5" fill="#3a6cc0" stroke="#20408a" stroke-width="0.6"/>
<rect x="2" y="4" width="2.6" height="2" fill="#7aa4e0"/>
<path d="M0.8 9.6 L9 9.6 L10 11.4 L0.2 11.4 Z" fill="#a0a0a0"/></svg>
<div style="left:134px;top:403px;width:562px;height:20px;background:#fbfbfb;"></div>
<div style="left:54px;top:421px;width:643px;height:2px;background:#c6c7c8;border-radius:0 0 0 3px;"></div>
<div class="bt" style="left:135px;top:403px;width:86px;height:18px;color:#232627;letter-spacing:0.1px;"><b><span class="u">S</span>tart</b></div>
<div class="bt" style="left:226px;top:403px;width:86px;height:18px;color:#8d8f91;letter-spacing:0.0px;">St<span class="u">o</span>p</div>
<div class="bt" style="left:316px;top:403px;width:86px;height:18px;color:#8d8f91;letter-spacing:-0.6px;"><span class="u">P</span>ause</div>
<div class="bt" style="left:407px;top:403px;width:86px;height:18px;color:#8d8f91;letter-spacing:-0.267px;">Pl<span class="u">a</span>y</div>
<div class="bt" style="left:497px;top:403px;width:86px;height:18px;color:#232627;letter-spacing:0.05px;"><b>F<span class="u">o</span>lder</b></div>
<div class="bt" style="left:588px;top:403px;width:86px;height:18px;color:#232627;letter-spacing:0.05px;"><b>S<span class="u">n</span>apshot</b></div>
<div style="left:678px;top:404px;width:18px;height:16px;border:1px solid #c0c1c2;border-radius:2px;background:#ffffff;box-sizing:border-box;"></div>
<svg style="position:absolute;left:680px;top:405px" width="14" height="14" viewBox="0 0 14 14"><circle cx="7" cy="6.5" r="5.6" fill="#fffdf8" stroke="#1d6fd8" stroke-width="1.5"/><circle cx="7" cy="4" r="1.1" fill="#1d6fd8"/><rect x="6.1" y="5.6" width="1.8" height="4.6" rx="0.6" fill="#1d6fd8"/></svg>
</body></html>
